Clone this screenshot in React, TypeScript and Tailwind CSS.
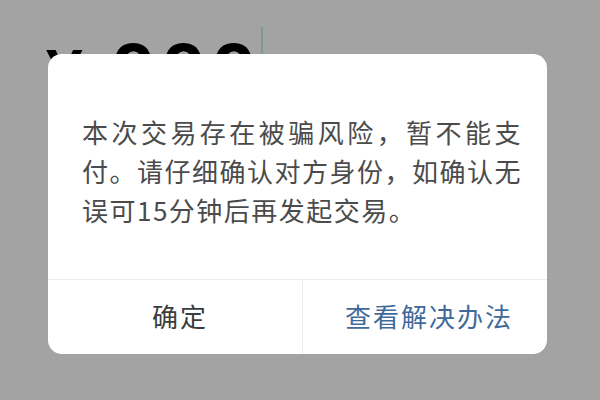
const cjk = { fontFamily: '"Noto Sans CJK SC", "Noto Sans", sans-serif' };
const latin = { fontFamily: '"Liberation Sans", Arial, sans-serif' };

const lines = ["本次交易存在被骗风险，暂不能支", "付。请仔细确认对方身份，如确认无", "误可15分钟后再发起交易。"];

export default function App() {
  return (
    <div className="relative w-[600px] h-[400px] overflow-hidden bg-[#a3a3a3]" style={cjk}>
      {/* amount field behind the dialog */}
      <div className="flex items-start pl-[46px] pt-[27px]">
        <div className="flex items-baseline mt-[5px] font-bold leading-none text-black" style={latin}>
          <span className="text-[66px]">¥</span>
          <span className="ml-[30px] text-[76px] tracking-[8px]">999</span>
        </div>
        <span className="ml-[-3px] w-[2px] h-[60px] bg-[#7f9a8f]" />
      </div>

      {/* dialog */}
      <div className="absolute left-[48px] top-[54px] w-[499px] h-[300px] bg-white rounded-[14px] flex flex-col overflow-hidden">
        <div className="h-[225px] pt-[58px] pl-[34px] pr-[25px] text-[26px] leading-[39px] tracking-[1.5px] text-[#4b4b4b]">
          {lines.map((l, i) => (
            <div
              key={l}
              className={i < 2 ? "whitespace-nowrap text-justify [text-align-last:justify]" : "whitespace-nowrap"}
            >
              {l}
            </div>
          ))}
        </div>
        <div className="flex flex-1 border-t border-[#ececec] text-[26px] tracking-[2px]">
          <div className="w-[255px] flex items-center justify-center text-[#3c3c3c] border-r border-[#efefef] pb-[3px] pl-[10px]">
            确定
          </div>
          <div className="flex-1 flex items-center justify-center text-[#3f6a9b] pb-[3px] pl-[8px]">
            查看解决办法
          </div>
        </div>
      </div>
    </div>
  );
}
